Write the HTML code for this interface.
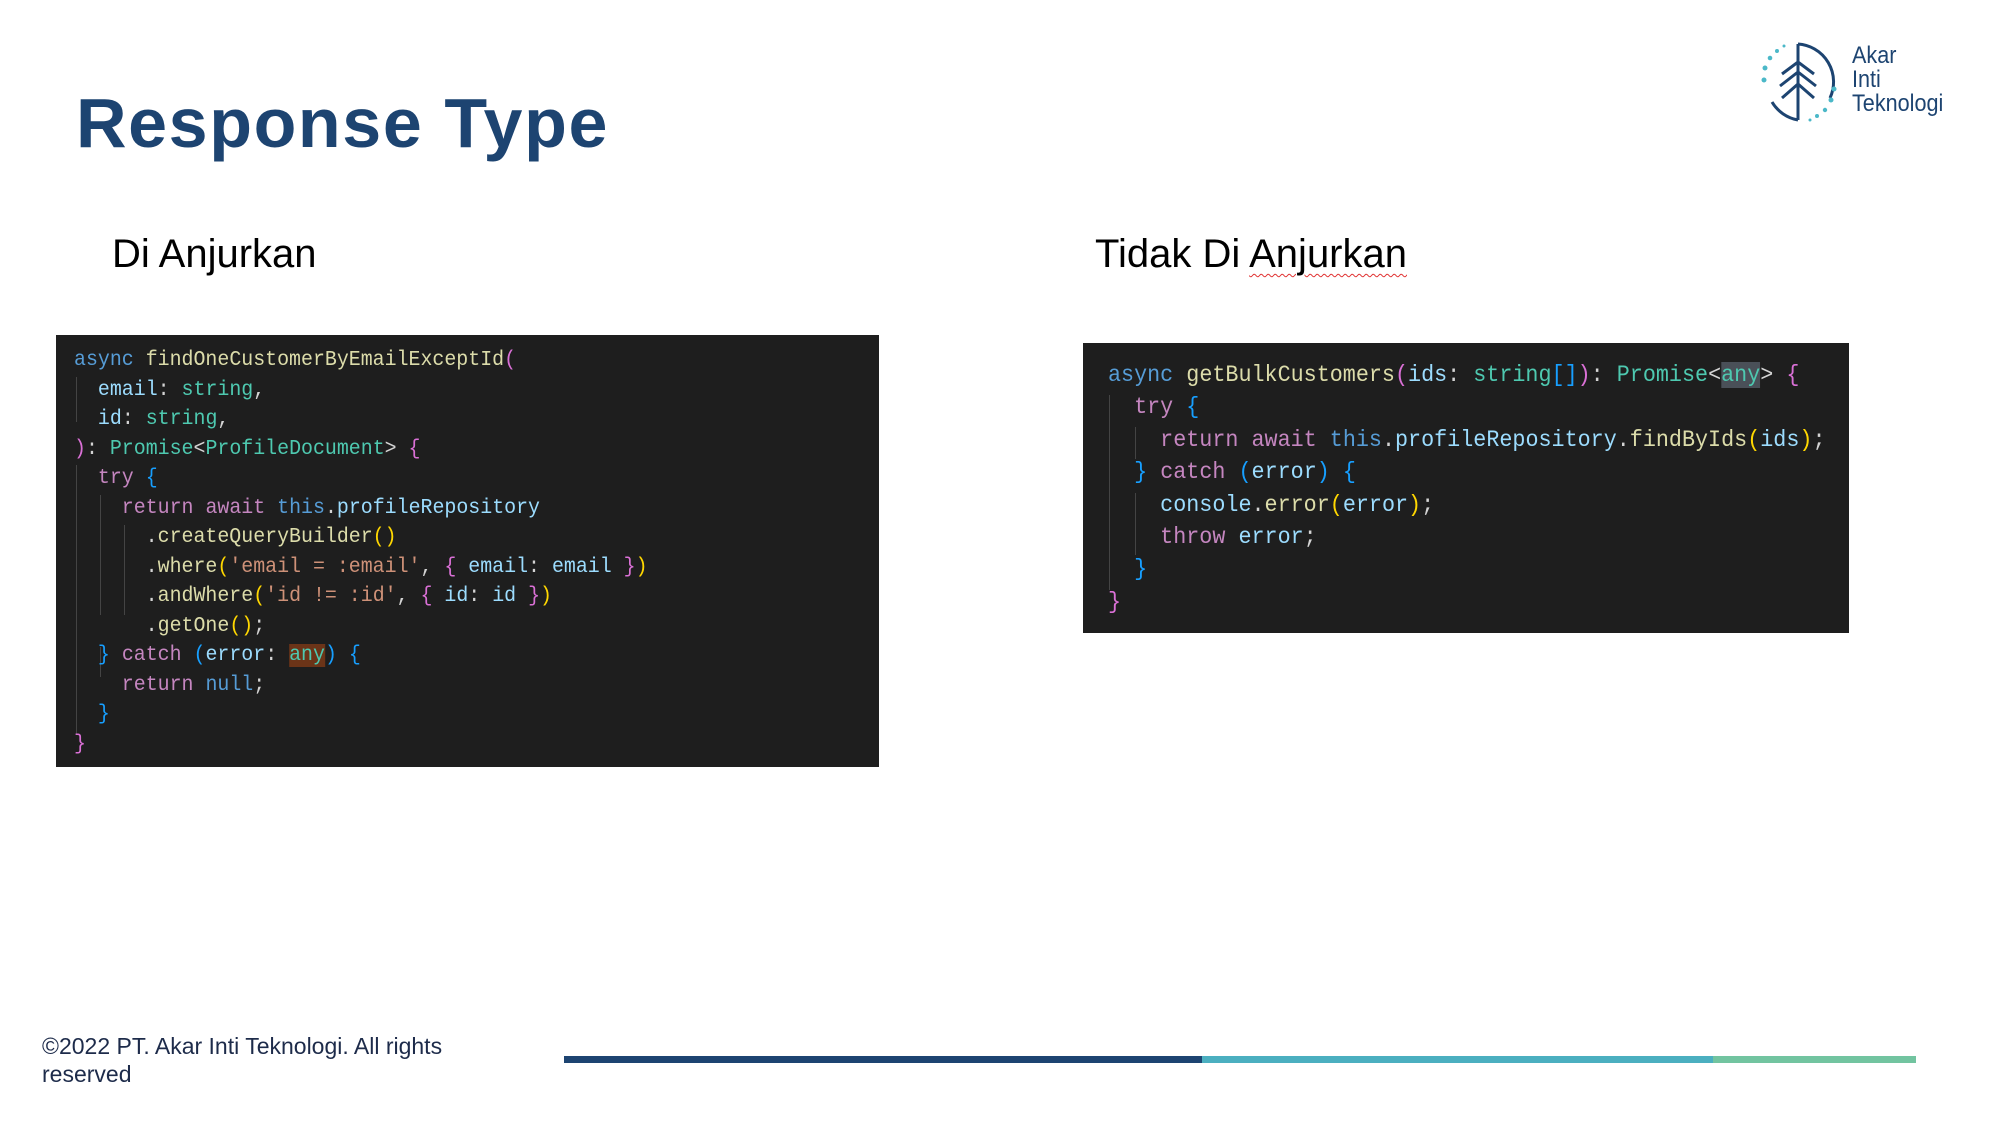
<!DOCTYPE html>
<html><head><meta charset="utf-8"><style>
body{margin:0;width:1992px;height:1130px;background:#fff;position:relative;overflow:hidden;font-family:"Liberation Sans",sans-serif}
.abs{position:absolute}
h1{position:absolute;left:76px;top:83px;margin:0;font-size:70px;font-weight:bold;color:#1d4471;letter-spacing:1.6px}
.sub{font-size:40px;color:#000}
.box{position:absolute;background:#1e1e1e}
pre{margin:0;font-family:"Liberation Mono",monospace;color:#d4d4d4;transform-origin:0 0;position:absolute}
.k{color:#569cd6}.f{color:#dcdcaa}.p{color:#9cdcfe}.t{color:#4ec9b0}.c{color:#c586c0}.s{color:#ce9178}
.y{color:#ffd700}.m{color:#da70d6}.b{color:#179fff}
.g{position:absolute;width:1px;background:#444}
</style></head><body>
<h1>Response Type</h1>
<div class="abs sub" style="left:112px;top:232px">Di Anjurkan</div>
<div class="abs sub" style="left:1095px;top:232px">Tidak Di <span style="text-decoration:underline wavy #e03030;text-decoration-thickness:1px;text-underline-offset:6px">Anjurkan</span></div>

<div class="box" style="left:56px;top:335px;width:823px;height:432px">
<div class="g" style="left:20px;top:42px;height:45px"></div>
<div class="g" style="left:20px;top:130px;height:270px"></div>
<div class="g" style="left:44px;top:160px;height:120px"></div>
<div class="g" style="left:68px;top:190px;height:90px"></div>
<div class="g" style="left:44px;top:312px;height:30px"></div>
<pre style="left:18px;top:11px;font-size:21px;line-height:29.5px;transform:scaleX(0.948)"><span class="k">async</span> <span class="f">findOneCustomerByEmailExceptId</span><span class="m">(</span>
  <span class="p">email</span>: <span class="t">string</span>,
  <span class="p">id</span>: <span class="t">string</span>,
<span class="m">)</span>: <span class="t">Promise</span>&lt;<span class="t">ProfileDocument</span>&gt; <span class="m">{</span>
  <span class="c">try</span> <span class="b">{</span>
    <span class="c">return</span> <span class="c">await</span> <span class="k">this</span>.<span class="p">profileRepository</span>
      .<span class="f">createQueryBuilder</span><span class="y">()</span>
      .<span class="f">where</span><span class="y">(</span><span class="s">'email = :email'</span>, <span class="m">{</span> <span class="p">email</span>: <span class="p">email</span> <span class="m">}</span><span class="y">)</span>
      .<span class="f">andWhere</span><span class="y">(</span><span class="s">'id != :id'</span>, <span class="m">{</span> <span class="p">id</span>: <span class="p">id</span> <span class="m">}</span><span class="y">)</span>
      .<span class="f">getOne</span><span class="y">()</span>;
  <span class="b">}</span> <span class="c">catch</span> <span class="b">(</span><span class="p">error</span>: <span class="t" style="background:#6b3418">any</span><span class="b">)</span> <span class="b">{</span>
    <span class="c">return</span> <span class="k">null</span>;
  <span class="b">}</span>
<span class="m">}</span></pre>
</div>

<div class="box" style="left:1083px;top:343px;width:766px;height:290px">
<div class="g" style="left:26px;top:52px;height:195px"></div>
<div class="g" style="left:52px;top:84px;height:32px"></div>
<div class="g" style="left:52px;top:150px;height:62px"></div>
<pre style="left:25px;top:16px;font-size:23px;line-height:32.4px;transform:scaleX(0.945)"><span class="k">async</span> <span class="f">getBulkCustomers</span><span class="m">(</span><span class="p">ids</span>: <span class="t">string</span><span class="b">[]</span><span class="m">)</span>: <span class="t">Promise</span>&lt;<span class="t" style="background:#4a5058">any</span>&gt; <span class="m">{</span>
  <span class="c">try</span> <span class="b">{</span>
    <span class="c">return</span> <span class="c">await</span> <span class="k">this</span>.<span class="p">profileRepository</span>.<span class="f">findByIds</span><span class="y">(</span><span class="p">ids</span><span class="y">)</span>;
  <span class="b">}</span> <span class="c">catch</span> <span class="b">(</span><span class="p">error</span><span class="b">)</span> <span class="b">{</span>
    <span class="p">console</span>.<span class="f">error</span><span class="y">(</span><span class="p">error</span><span class="y">)</span>;
    <span class="c">throw</span> <span class="p">error</span>;
  <span class="b">}</span>
<span class="m">}</span></pre>
</div>

<svg class="abs" style="left:1760px;top:40px" width="90" height="85" viewBox="0 0 90 85">
<path d="M38 4 A38 38 0 0 1 70 58" fill="none" stroke="#1d4471" stroke-width="3"/>
<path d="M12 62 A38 38 0 0 0 38 80" fill="none" stroke="#1d4471" stroke-width="3"/>
<path d="M38 4 V80" stroke="#1d4471" stroke-width="3"/>
<path d="M22 34 L38 22 L54 34 M20 46 L38 32 L56 46 M22 58 L38 44 L54 58" fill="none" stroke="#1d4471" stroke-width="3"/>
<g fill="#4bb8c8"><circle cx="4" cy="40" r="2.5"/><circle cx="5" cy="28" r="2.5"/><circle cx="10" cy="18" r="2.3"/><circle cx="17" cy="11" r="2"/><circle cx="24" cy="6" r="1.5"/><circle cx="74" cy="49" r="2.5"/><circle cx="71" cy="60" r="2.5"/><circle cx="65" cy="70" r="2.2"/><circle cx="57" cy="76" r="2"/><circle cx="50" cy="80" r="1.5"/></g>
</svg>
<div class="abs" style="left:1852px;top:44px;font-size:24px;line-height:24px;color:#1d4471;transform:scaleX(0.9);transform-origin:0 0">Akar<br>Inti<br>Teknologi</div>

<div class="abs" style="left:42px;top:1032px;font-size:23px;line-height:28px;color:#1d2b4a;width:460px">©2022 PT. Akar Inti Teknologi. All rights reserved</div>
<div class="abs" style="left:564px;top:1056px;width:638px;height:7px;background:#1d4471"></div>
<div class="abs" style="left:1202px;top:1056px;width:511px;height:7px;background:#4bafc0"></div>
<div class="abs" style="left:1713px;top:1056px;width:203px;height:7px;background:#72c4a0"></div>
</body></html>
